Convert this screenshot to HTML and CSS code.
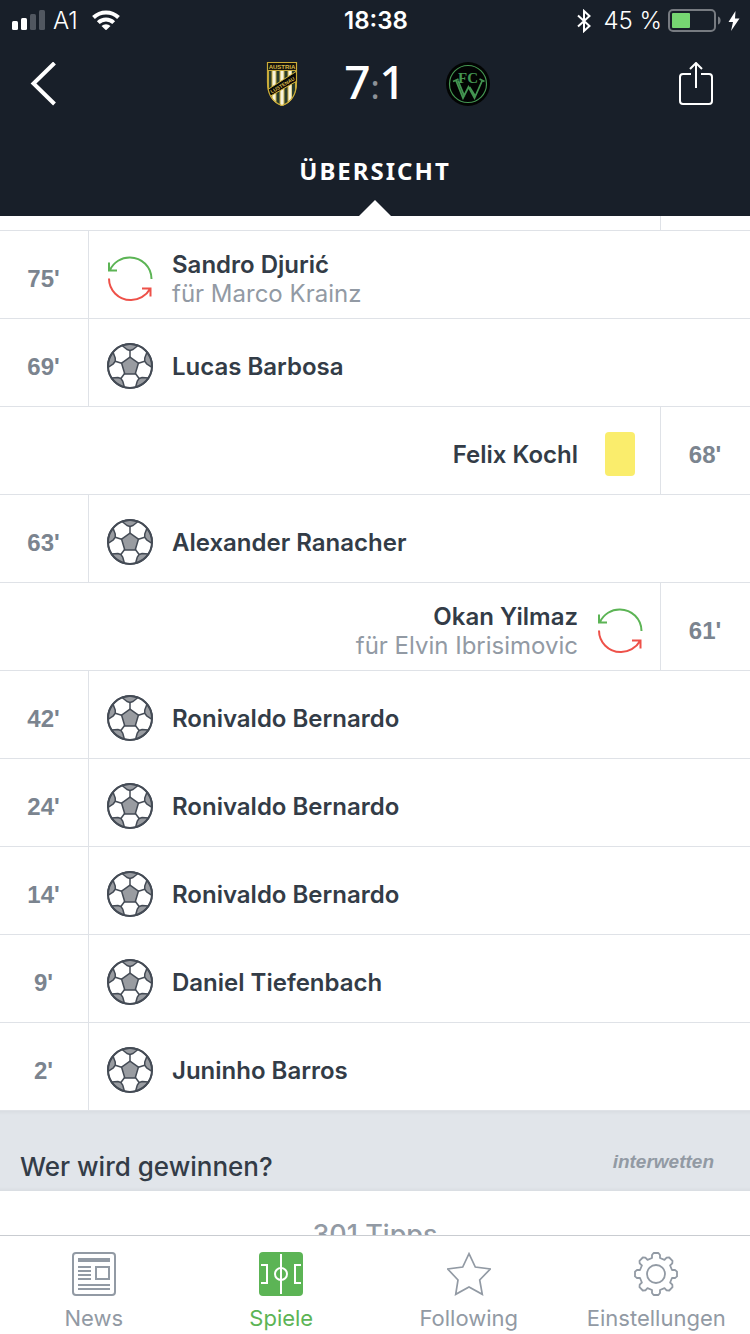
FILE: index.html
```html
<!DOCTYPE html>
<html lang="de">
<head>
<meta charset="utf-8">
<meta name="viewport" content="width=device-width, initial-scale=1">
<title>Spielübersicht</title>
<link rel="stylesheet" href="styles.css">
</head>
<body>
<svg class="sprite" aria-hidden="true">
  <symbol id="ball" viewBox="-24 -24 48 48">
    <g stroke="#444b55" stroke-width="1.5" stroke-linejoin="round">
      <circle r="22" fill="#fff"/>
      <g id="seam"><path d="M-8-20.500A22 22 0 0 1 8-20.500L3-16.500 0-15.500-3-16.500Z" fill="#999ca1"/><path d="M0-8V-15.500"/></g>
      <use href="#seam" transform="rotate(72)"/>
      <use href="#seam" transform="rotate(144)"/>
      <use href="#seam" transform="rotate(216)"/>
      <use href="#seam" transform="rotate(288)"/>
      <path d="M0-8.800 8.400-2.800 5.200 8H-5.200L-8.400-2.800Z" fill="#999ca1"/>
      <circle r="22" fill="none" stroke-width="2"/>
    </g>
  </symbol>
  <symbol id="swap" viewBox="0 0 48 48">
    <g fill="none" stroke-width="2">
      <path stroke="#5cb455" d="M45.500 25A21.500 21.500 0 0 0 24 3.500A21.500 21.500 0 0 0 4 16M3 8.500V16.500H11"/>
      <path stroke="#ee5149" d="M3 24.500A21.500 21.500 0 0 0 24.500 46A21.500 21.500 0 0 0 44 35M36 34.500H44.500V42.500"/>
    </g>
  </symbol>
</svg>

<header class="top">
  <div class="status">
    <div class="status-side">
      <svg class="signal" viewBox="0 0 33 20"><g fill="#fff"><rect y="11" width="6" height="9" rx="1.500"/><rect x="9" y="8" width="6" height="12" rx="1.500"/></g><g fill="#515760"><rect x="18" y="4" width="6" height="16" rx="1.500"/><rect x="27" width="6" height="20" rx="1.500"/></g></svg>
      <span>A1</span>
      <svg class="wifi" viewBox="0 0 28 20"><g fill="none" stroke="#fff" stroke-width="4"><path d="M1.500 7.500a18 18 0 0 1 25 0"/><path d="M6.300 12.600a11 11 0 0 1 15.400 0"/></g><path d="M9.500 16a6.500 6.500 0 0 1 9 0L14 20.300Z" fill="#fff"/></svg>
    </div>
    <time class="clock">18:38</time>
    <div class="status-side status-end">
      <svg class="bluetooth" viewBox="0 0 14 24"><path d="M1 6.500 12.500 17 7 22V2L12.500 7 1 17.500" fill="none" stroke="#fff" stroke-width="2"/></svg>
      <span>45 %</span>
      <svg class="battery" viewBox="0 0 54 24"><rect x="1" y="1" width="46" height="21" rx="4" fill="none" stroke="#777b81" stroke-width="2"/><rect x="4" y="4" width="18" height="15" rx="1" fill="#76d672"/><path d="M50 7.500c3.500 1 3.500 7 0 8Z" fill="#777b81"/></svg>
      <svg class="bolt" viewBox="0 0 12 20"><path d="M7.500 0 .5 11H5L3 20 11.500 7.500H7Z" fill="#fff"/></svg>
    </div>
  </div>
  <div class="match">
    <button class="tool" type="button" aria-label="Zurück"><svg viewBox="0 0 44 44"><path d="M30.500 1 9.500 21.500 30.500 42" fill="none" stroke="#fff" stroke-width="4"/></svg></button>
    <div class="result">
      <svg class="crest" viewBox="0 0 44 44" role="img" aria-label="Austria Lustenau">
        <clipPath id="shield"><path d="M7 0H37V20C37 33 31 41 22 44 13 41 7 33 7 20Z"/></clipPath>
        <g clip-path="url(#shield)">
          <path d="M7 0H37V44H7Z" fill="#c5a93c"/>
          <path d="M9 9h2.500v35H9zM16.500 9h3v35h-3zM24.500 9h3v35h-3zM32 9h3v35h-3z" fill="#283c2d"/>
          <path d="M12.500 9h3v35h-3zM20.500 9h3v35h-3zM28.500 9h3v35h-3z" fill="#f6f3dd"/>
          <path d="M8 1H36V8H8Z" fill="#15130c"/>
          <path d="M7 28 37 9V19L7 36Z" fill="#080807" stroke="#d2b239"/>
          <text x="22" y="7" class="crest-name">AUSTRIA</text>
          <text x="22" y="25" class="crest-name crest-town" transform="rotate(-31 22 22)">LUSTENAU</text>
        </g>
        <path d="M7.500.5H36.500V20C36.500 33 30.500 40.500 22 43.500 13.500 40.500 7.500 33 7.500 20Z" fill="none" stroke="#cbac38" stroke-width="1.200"/>
      </svg>
      <p class="score">7<span class="colon">:</span>1</p>
      <svg class="crest" viewBox="0 0 44 44" role="img" aria-label="FC Wacker">
        <circle cx="22" cy="22" r="22" fill="#020403"/>
        <circle cx="22" cy="22" r="18.500" fill="none" stroke="#439551" stroke-width="1.200"/>
        <text x="22" y="21" class="crest-fc">FC</text>
        <path d="M7 19.500 12.500 17M10 18.500 17 36 22.500 25 28.500 36 36.500 18M12 18.500 18.500 34.500M23.500 25 29.500 34.500M33.500 17 38.500 19.500" fill="none" stroke="#439551" stroke-width="1.800"/>
      </svg>
    </div>
    <button class="tool" type="button" aria-label="Teilen"><svg viewBox="0 0 44 44"><path d="M17 12H9a3 3 0 0 0-3 3V39a3 3 0 0 0 3 3H35a3 3 0 0 0 3-3V15a3 3 0 0 0-3-3H27M22 26V1M16 7 22 1 28 7" fill="none" stroke="#fff" stroke-width="2"/></svg></button>
  </div>
  <h1 class="section">Übersicht</h1>
</header>

<main class="content">
  <ol class="events">
    <li class="event away passed"><span class="minute"></span></li>
    <li class="event"><span class="minute">75'</span><svg class="kind"><use href="#swap"/></svg><p class="who">Sandro Djurić<small>für Marco Krainz</small></p></li>
    <li class="event"><span class="minute">69'</span><svg class="kind"><use href="#ball"/></svg><p class="who">Lucas Barbosa</p></li>
    <li class="event away"><span class="minute">68'</span><span class="kind"><i class="card"></i></span><p class="who">Felix Kochl</p></li>
    <li class="event"><span class="minute">63'</span><svg class="kind"><use href="#ball"/></svg><p class="who">Alexander Ranacher</p></li>
    <li class="event away"><span class="minute">61'</span><svg class="kind"><use href="#swap"/></svg><p class="who">Okan Yilmaz<small>für Elvin Ibrisimovic</small></p></li>
    <li class="event"><span class="minute">42'</span><svg class="kind"><use href="#ball"/></svg><p class="who">Ronivaldo Bernardo</p></li>
    <li class="event"><span class="minute">24'</span><svg class="kind"><use href="#ball"/></svg><p class="who">Ronivaldo Bernardo</p></li>
    <li class="event"><span class="minute">14'</span><svg class="kind"><use href="#ball"/></svg><p class="who">Ronivaldo Bernardo</p></li>
    <li class="event"><span class="minute">9'</span><svg class="kind"><use href="#ball"/></svg><p class="who">Daniel Tiefenbach</p></li>
    <li class="event"><span class="minute">2'</span><svg class="kind"><use href="#ball"/></svg><p class="who">Juninho Barros</p></li>
  </ol>
  <div class="poll">
    <h2 class="question">Wer wird gewinnen?</h2>
    <span class="sponsor">interwetten</span>
  </div>
  <p class="tips">301 Tipps</p>
</main>

<nav class="tabs">
  <a class="tab" href="#news"><svg viewBox="0 0 44 44"><g fill="none" stroke="currentColor" stroke-width="2"><rect x="1" y="1" width="42" height="42" rx="3"/><path d="M6 8H38" stroke-width="4"/><path d="M6 15H19M6 19H19M6 23H19M6 27H19M6 33H38M6 37H38M24 15H37V27H24Z"/></g></svg>News</a>
  <a class="tab active" href="#spiele" aria-current="page"><svg viewBox="0 0 44 44"><rect width="44" height="44" rx="4" fill="currentColor"/><g fill="none" stroke="#fff" stroke-width="2"><path d="M22 2V42M2 13H8V31H2M42 13H36V31H42"/><circle cx="22" cy="22" r="6"/></g></svg>Spiele</a>
  <a class="tab" href="#following"><svg viewBox="0 0 44 44"><path d="M22 1.700 28.300 15 43.300 17 32.700 28 35.300 42.300 22 35 8.700 42.300 11 28 .7 17 15.700 15Z" fill="none" stroke="currentColor" stroke-width="1.700"/></svg>Following</a>
  <a class="tab" href="#einstellungen"><svg viewBox="-22 -22 44 44"><g fill="none" stroke="currentColor" stroke-width="1.800" stroke-linejoin="round"><circle r="9"/><path d="M-4-16V-19L-2.400-21H2.400L4-19V-16L8.500-14.100 10.600-16.300 13.200-16.500 16.500-13.200 16.300-10.600 14.100-8.500 16-4H19L21-2.400V2.400L19 4H16L14.100 8.500 16.300 10.600 16.500 13.200 13.200 16.500 10.600 16.300 8.500 14.100 4 16V19L2.400 21H-2.400L-4 19V16L-8.500 14.100-10.600 16.300-13.200 16.500-16.500 13.200-16.300 10.600-14.100 8.500-16 4H-19L-21 2.400V-2.400L-19-4H-16L-14.100-8.500-16.300-10.600-16.500-13.200-13.200-16.500-10.600-16.300-8.500-14.100Z"/></g></svg>Einstellungen</a>
</nav>
</body>
</html>
```
FILE: styles.css
```css
* { box-sizing: border-box; }

body {
  display: flex;
  flex-direction: column;
  height: 100vh;
  margin: 0;
  background: #fff;
  color: #333c47;
  font-family: Inter, "Liberation Sans", sans-serif;
}

h1, h2, p, ol { margin: 0; padding: 0; }
svg { display: block; flex: none; }
.sprite { position: absolute; width: 0; height: 0; }

.top {
  position: relative;
  flex: none;
  background: #181f29;
  color: #fff;
}
.top::after {
  content: "";
  position: absolute;
  bottom: 0;
  left: 50%;
  border: 16px solid transparent;
  border-top-width: 0;
  border-bottom-color: #fff;
  transform: translateX(-50%);
}

.status {
  display: grid;
  grid-template-columns: 1fr auto 1fr;
  align-items: center;
  height: 40px;
  padding: 0 10px 0 12px;
  font-size: 24px;
  font-weight: 300;
}
.status-side { display: flex; align-items: center; gap: 8px; }
.status-end {
  justify-content: flex-end;
  gap: 6px;
  padding-top: 1px;
}
.clock { font-weight: 600; }
.signal { width: 33px; height: 20px; }
.wifi { width: 28px; height: 20px; margin-left: 6px; }
.bluetooth { width: 14px; height: 24px; margin-right: 6px; }
.battery { width: 54px; height: 24px; }
.bolt { width: 12px; height: 20px; }

.match {
  display: grid;
  grid-template-columns: 1fr auto 1fr;
  align-items: center;
  height: 88px;
  padding: 0 32px 0 24px;
}
.tool {
  width: 44px;
  height: 44px;
  padding: 0;
  border: 0;
  background: none;
}
.tool:last-child { justify-self: end; }
.result {
  display: flex;
  align-items: center;
  justify-content: space-between;
  width: 230px;
  margin-left: 8px;
}
.crest { width: 44px; height: 44px; }
.crest-name { fill: #d8ba49; font: 700 6px "Liberation Sans", sans-serif; text-anchor: middle; }
.crest-town { font-size: 5px; }
.crest-fc { fill: #439551; font: 700 15px "Liberation Serif", serif; text-anchor: middle; }
.score { font: 500 46px/56px "Noto Sans", sans-serif; }
.colon { color: #8d9197; font-size: 32px; }

.section {
  height: 88px;
  color: #fff;
  font: 700 24px/86px "Noto Sans", sans-serif;
  letter-spacing: 2px;
  text-align: center;
  text-transform: uppercase;
}

.content { flex: 1; min-height: 0; overflow: hidden; }
.events { list-style: none; }
.event {
  display: flex;
  min-height: 88px;
  border-bottom: 1px solid #dfe2e7;
}
.event.away { flex-direction: row-reverse; text-align: right; }
.event.passed { min-height: 15px; }
.minute {
  display: flex;
  align-items: center;
  justify-content: center;
  width: 89px;
  padding: 8px 1px 0 0;
  border-right: 1px solid #dfe2e7;
  color: #7b848f;
  font: 700 24px "Liberation Sans", sans-serif;
}
.away .minute { width: 90px; border-right: 0; border-left: 1px solid #dfe2e7; }
.kind {
  display: flex;
  align-self: center;
  justify-content: center;
  width: 48px;
  height: 48px;
  margin: 7px 18px 0 17px;
}
.away .kind { margin: 7px 16px 0 18px; }
.card {
  align-self: center;
  width: 30px;
  height: 44px;
  border-radius: 4px;
  background: #faed6c;
}
.who {
  align-self: center;
  padding-top: 8px;
  font-size: 24px;
  font-weight: 600;
  line-height: 29px;
}
.who small {
  display: block;
  color: #929aa4;
  font-size: 24px;
  font-weight: 400;
}

.poll {
  display: flex;
  align-items: center;
  justify-content: space-between;
  height: 80px;
  padding: 30px 36px 0 20px;
  background: linear-gradient(#d9dde2, #e1e5ea 4px, #e1e5ea 76px, #d9dde2);
}
.question { font-size: 26px; font-weight: 500; }
.sponsor {
  margin-bottom: 8px;
  color: #929aa4;
  font: italic 700 19px "Liberation Sans", sans-serif;
}
.tips {
  padding-top: 28px;
  color: #929aa4;
  font-size: 27px;
  font-weight: 500;
  line-height: 32px;
  text-align: center;
}

.tabs {
  display: flex;
  flex: none;
  height: 99px;
  border-top: 1px solid #c9ccd1;
  background: #fff;
}
.tab {
  display: flex;
  flex: 1 1 0;
  flex-direction: column;
  align-items: center;
  gap: 8px;
  padding-top: 16px;
  color: #929aa4;
  font-size: 22px;
  line-height: 28px;
  text-decoration: none;
}
.tab svg { width: 44px; height: 44px; }
.tab.active { color: #5cb455; }
```
